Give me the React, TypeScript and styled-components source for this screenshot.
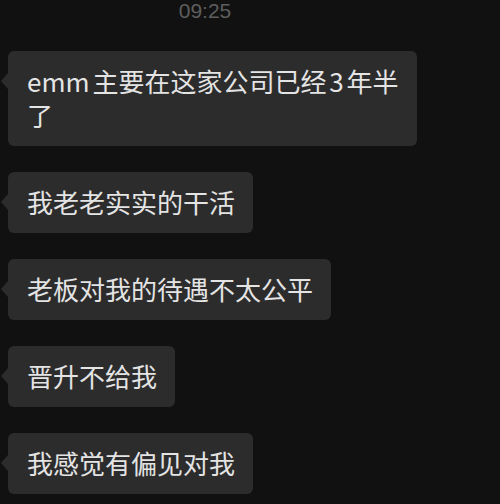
import React from "react";
import styled, { createGlobalStyle } from "styled-components";

const Global = createGlobalStyle`
  html, body {
    margin: 0;
    padding: 0;
    background: #111111;
  }
  body {
    width: 500px;
    height: 504px;
    overflow: hidden;
  }
`;

const Screen = styled.div`
  width: 500px;
  height: 504px;
  background: #111111;
  display: flex;
  flex-direction: column;
  font-family: "Noto Sans CJK SC", "Noto Sans", sans-serif;
`;

const TimeStamp = styled.div`
  width: 410px;
  text-align: center;
  font-family: "Liberation Sans", "Noto Sans", sans-serif;
  font-size: 21px;
  line-height: 21px;
  color: #5e5e5e;
  height: 20px;
`;

const MessageList = styled.div`
  display: flex;
  flex-direction: column;
  align-items: flex-start;
  gap: 26px;
  padding: 31px 0 0 8px;
`;

const Bubble = styled.div`
  position: relative;
  box-sizing: border-box;
  max-width: 409px;
  padding: 13px 18px 14px 19px;
  background: #2c2c2c;
  border-radius: 6px;
  color: #e4e4e4;
  font-size: 26px;
  line-height: 34px;
  word-spacing: -3px;

  &::before {
    content: "";
    position: absolute;
    left: -7px;
    top: 22px;
    width: 0;
    height: 0;
    border-top: 8px solid transparent;
    border-bottom: 8px solid transparent;
    border-right: 7px solid #2c2c2c;
  }
`;

const messages = [
  "emm 主要在这家公司已经 3 年半了",
  "我老老实实的干活",
  "老板对我的待遇不太公平",
  "晋升不给我",
  "我感觉有偏见对我",
];

export default function App() {
  return (
    <>
      <Global />
      <Screen>
        <TimeStamp>09:25</TimeStamp>
        <MessageList>
          {messages.map((m, i) => (
            <Bubble key={i}>{m}</Bubble>
          ))}
        </MessageList>
      </Screen>
    </>
  );
}
